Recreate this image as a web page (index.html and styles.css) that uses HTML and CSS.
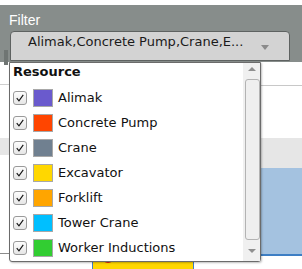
FILE: index.html
```html
<!DOCTYPE html>
<html>
<head>
<meta charset="utf-8">
<link rel="stylesheet" href="styles.css">
</head>
<body>
<div class="page">
  <div class="top-strip"></div>
  <div class="filter-panel">
    <div class="filter-label">Filter</div>
    <div class="select-btn">
      <span class="select-text">Alimak,Concrete Pump,Crane,E...</span>
      <span class="caret"></span>
    </div>
  </div>
  <div class="content">
    <div class="col-left">
      <div class="l1"></div>
      <div class="l2"></div>
      <div class="l3"></div>
      <div class="l4"></div>
    </div>
    <div class="col-right">
      <div class="r1"></div>
      <div class="r2"></div>
      <div class="r3"></div>
      <div class="r4"></div>
      <div class="r5"><div class="event"><span class="dot"></span></div></div>
    </div>
  </div>
  <div class="edge-mark"></div>
  <div class="dropdown">
    <div class="list">
      <div class="group-head">Resource</div>
      <div class="item"><span class="cb"><svg width="14" height="14" viewBox="0 0 14 14"><path d="M3.2 7.2 L5.8 10.2 L10.8 3.4" fill="none" stroke="#111" stroke-width="1.3"/></svg></span><span class="sw" style="background:#6a5acd"></span><span class="lbl">Alimak</span></div>
      <div class="item"><span class="cb"><svg width="14" height="14" viewBox="0 0 14 14"><path d="M3.2 7.2 L5.8 10.2 L10.8 3.4" fill="none" stroke="#111" stroke-width="1.3"/></svg></span><span class="sw" style="background:#ff4500"></span><span class="lbl">Concrete Pump</span></div>
      <div class="item"><span class="cb"><svg width="14" height="14" viewBox="0 0 14 14"><path d="M3.2 7.2 L5.8 10.2 L10.8 3.4" fill="none" stroke="#111" stroke-width="1.3"/></svg></span><span class="sw" style="background:#708090"></span><span class="lbl">Crane</span></div>
      <div class="item"><span class="cb"><svg width="14" height="14" viewBox="0 0 14 14"><path d="M3.2 7.2 L5.8 10.2 L10.8 3.4" fill="none" stroke="#111" stroke-width="1.3"/></svg></span><span class="sw" style="background:#ffd700"></span><span class="lbl">Excavator</span></div>
      <div class="item"><span class="cb"><svg width="14" height="14" viewBox="0 0 14 14"><path d="M3.2 7.2 L5.8 10.2 L10.8 3.4" fill="none" stroke="#111" stroke-width="1.3"/></svg></span><span class="sw" style="background:#ffa500"></span><span class="lbl">Forklift</span></div>
      <div class="item"><span class="cb"><svg width="14" height="14" viewBox="0 0 14 14"><path d="M3.2 7.2 L5.8 10.2 L10.8 3.4" fill="none" stroke="#111" stroke-width="1.3"/></svg></span><span class="sw" style="background:#00bfff"></span><span class="lbl">Tower Crane</span></div>
      <div class="item"><span class="cb"><svg width="14" height="14" viewBox="0 0 14 14"><path d="M3.2 7.2 L5.8 10.2 L10.8 3.4" fill="none" stroke="#111" stroke-width="1.3"/></svg></span><span class="sw" style="background:#32cd32"></span><span class="lbl">Worker Inductions</span></div>
    </div>
    <div class="scrollbar">
      <div class="arrow up"></div>
      <div class="thumb"></div>
      <div class="arrow down"></div>
    </div>
  </div>
</div>
</body>
</html>
```
FILE: styles.css
```css
html, body {
  margin: 0;
  padding: 0;
  background: #fff;
}
.page {
  position: relative;
  width: 302px;
  height: 269px;
  overflow: hidden;
}
.top-strip {
  height: 5px;
  background: #fff;
}
.filter-panel {
  height: 57px;
  box-sizing: border-box;
  background: #878d8b;
  padding: 7px 0 0 9px;
}
.filter-label {
  font-family: "Liberation Sans", Arial, sans-serif;
  font-size: 14px;
  line-height: 16px;
  color: #fff;
}
.select-btn {
  margin: 3px 0 0 1px;
  width: 280px;
  height: 30px;
  box-sizing: border-box;
  background: #d3d3d3;
  border: 1px solid #5e6261;
  border-radius: 4px 4px 0 0;
  display: flex;
  align-items: flex-start;
  padding: 2px 0 0 17px;
}
.select-text {
  font-family: "DejaVu Sans", Verdana, sans-serif;
  font-size: 13px;
  line-height: 16px;
  color: #1a1a1a;
  white-space: nowrap;
}
.caret {
  margin: 11px 20px 0 auto;
  width: 0;
  height: 0;
  border-left: 4px solid transparent;
  border-right: 4px solid transparent;
  border-top: 5px solid #8a8a8a;
}
.content {
  display: flex;
  height: 207px;
}
.col-left {
  width: 9px;
  display: flex;
  flex-direction: column;
}
.l1 { height: 22px; border-bottom: 1px solid #cfcfcf; }
.l2 { height: 53px; }
.l3 { height: 17px; background: #e6e6e6; }
.l4 { height: 98px; border-bottom: 1px solid #8c8c8c; }
.col-right {
  flex: 1;
  display: flex;
  flex-direction: column;
}
.r1 { height: 23px; border-bottom: 1px solid #c8c8c8; }
.r2 { height: 53px; }
.r3 { height: 31px; background: #e6e6e6; }
.r4 { height: 87px; background: #a4c2e0; border-bottom: 2px solid #3d7ec4; }
.r5 { flex: 1; padding: 3px 0 0 83px; }
.event {
  position: relative;
  width: 102px;
  height: 10px;
  box-sizing: border-box;
  background: #ffd700;
  border-left: 1px solid #3d7ec4;
  border-right: 1px solid #3d7ec4;
  overflow: hidden;
}
.dot {
  position: absolute;
  left: 9px;
  top: -6px;
  width: 12px;
  height: 10px;
  border-radius: 50%;
  background: #e0161b;
}
.edge-mark {
  position: absolute;
  left: 4px;
  top: 50px;
  width: 4px;
  height: 15px;
  background: #6f7573;
}
.dropdown {
  position: absolute;
  left: 9px;
  top: 62px;
  width: 252px;
  height: 200px;
  box-sizing: border-box;
  background: #fff;
  border: 1px solid #6b6b6b;
  border-radius: 0 0 3px 3px;
  box-shadow: 1px 1px 2px rgba(0,0,0,0.25);
  display: flex;
}
.list {
  flex: 1;
  font-family: "DejaVu Sans", Verdana, sans-serif;
  font-size: 13px;
  color: #111;
}
.group-head {
  font-weight: bold;
  line-height: 16px;
  padding: 1px 0 5px 3px;
}
.item {
  height: 25px;
  display: flex;
  align-items: center;
  padding-left: 3px;
  line-height: 25px;
  white-space: nowrap;
}
.cb {
  width: 14px;
  height: 14px;
  box-sizing: border-box;
  border: 1px solid #9a9a9a;
  border-radius: 3px;
  background: linear-gradient(#fdfdfd, #e6e6e6);
  display: flex;
  align-items: center;
  justify-content: center;
}
.cb svg {
  display: block;
}
.sw {
  width: 20px;
  height: 18px;
  box-sizing: border-box;
  border: 1px solid #a8a8a8;
  margin-left: 6px;
}
.lbl {
  margin-left: 5px;
}
.scrollbar {
  width: 17px;
  background: #f0f0f0;
  display: flex;
  flex-direction: column;
  align-items: center;
}
.arrow {
  width: 0;
  height: 0;
  border-left: 4px solid transparent;
  border-right: 4px solid transparent;
}
.arrow.up {
  border-bottom: 4px solid #8f8f8f;
  margin: 4px 0 8px;
}
.arrow.down {
  border-top: 4px solid #8f8f8f;
  margin: 9px 0 0;
}
.thumb {
  width: 15px;
  height: 161px;
  box-sizing: border-box;
  border: 1px solid #b3b3b3;
  border-radius: 3px;
  background: #efefef;
  margin-left: 1px;
}
```
